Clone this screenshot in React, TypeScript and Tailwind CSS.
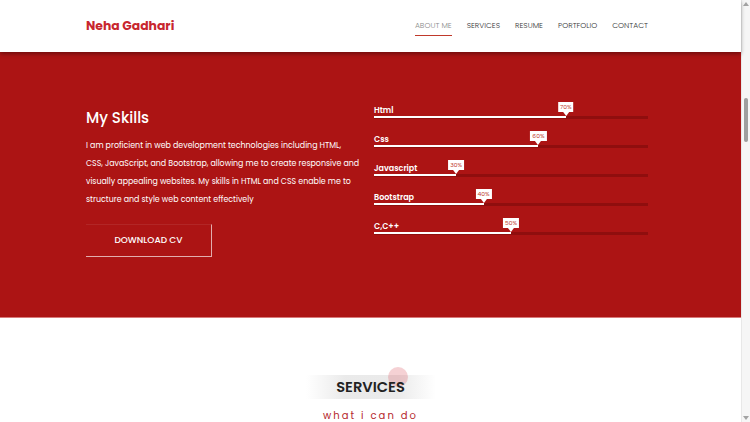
const skills = [
  { name: 'Html', pct: 70 },
  { name: 'Css', pct: 60 },
  { name: 'Javascript', pct: 30 },
  { name: 'Bootstrap', pct: 40 },
  { name: 'C,C++', pct: 50 },
];

const links = ['ABOUT ME', 'SERVICES', 'RESUME', 'PORTFOLIO', 'CONTACT'];

const font = { fontFamily: 'Poppins, Inter, "Noto Sans", sans-serif' };

function SkillBar({ name, pct }: { name: string; pct: number }) {
  return (
    <div className="relative h-[29px] pt-[6px]">
      <div className="h-[10px] text-[8px] leading-[10px] font-semibold text-white">{name}</div>
      <div className="relative h-[3px] bg-[#8f0e0e]">
        <div className="h-[2px] bg-white" style={{ width: `${pct}%` }} />
        {/* tooltip */}
        <div
          className="absolute bottom-[3px] flex flex-col items-center -translate-x-1/2"
          style={{ left: `${pct}%` }}
        >
          <div className="bg-white px-[2px] h-[10px] text-[6px] leading-[10px] text-[#c0392b]">{pct}%</div>
          <div className="w-0 h-0 border-l-[3px] border-r-[3px] border-t-[4px] border-l-transparent border-r-transparent border-t-white" />
        </div>
      </div>
    </div>
  );
}

export default function App() {
  return (
    <div className="flex h-[422px] w-[750px] overflow-hidden bg-white" style={font}>
      <div className="flex-1 flex flex-col">
        {/* Header */}
        <header className="relative z-10 h-[52px] shrink-0 bg-white shadow-[0_2px_4px_rgba(0,0,0,0.35)]">
          <div className="ml-[86px] w-[562px] h-full flex items-center justify-between">
            <div className="text-[12.4px] font-bold text-[#c8262e]">Neha Gadhari</div>
            <nav className="flex gap-[15px] text-[7.6px] font-light">
              {links.map((l, i) => (
                <a
                  key={l}
                  className={
                    i === 0
                      ? 'pt-[4px] pb-[3px] text-[#8a8a8a] border-b border-[#c0392b]'
                      : 'pt-[4px] pb-[3px] text-[#333333] border-b border-transparent'
                  }
                >
                  {l}
                </a>
              ))}
            </nav>
          </div>
        </header>

        {/* Skills */}
        <section className="h-[266px] shrink-0 bg-[#ac1414] border-b border-[#d87a7a]">
          <div className="ml-[86px] w-[562px] pt-[48px] flex gap-[14px]">
            <div className="w-[274px]">
              <h2 className="mt-[6px] text-[15px] leading-[24px] font-medium text-white">My Skills</h2>
              <p className="mt-[7px] text-[7.9px] leading-[18px] text-white whitespace-nowrap">
                I am proficient in web development technologies including HTML,
                <br />
                CSS, JavaScript, and Bootstrap, allowing me to create responsive and
                <br />
                visually appealing websites. My skills in HTML and CSS enable me to
                <br />
                structure and style web content effectively
              </p>
              <button className="mt-[15px] w-[126px] h-[33px] text-[9px] font-medium text-white border-solid border-t border-r border-b border-l-0 border-t-[rgba(255,255,255,0.08)] border-r-[rgba(255,255,255,0.65)] border-b-[rgba(255,255,255,0.65)]">
                DOWNLOAD CV
              </button>
            </div>
            <div className="w-[274px]">
              {skills.map((s) => (
                <SkillBar key={s.name} name={s.name} pct={s.pct} />
              ))}
            </div>
          </div>
        </section>

        {/* Services */}
        <section className="flex flex-col items-center pt-[57px] bg-white">
          <div className="relative flex items-center justify-center w-[130px] h-[24px] bg-[linear-gradient(90deg,rgba(232,232,232,0),rgba(232,232,232,0.9)_30%,rgba(232,232,232,0.9)_70%,rgba(232,232,232,0))]">
            <div className="absolute left-[82px] -top-[8px] w-[20px] h-[20px] rounded-full bg-[rgba(220,90,100,0.28)]" />
            <h2 className="relative text-[14.7px] font-semibold text-[#222]">SERVICES</h2>
          </div>
          <div className="mt-[9px] text-[10px] tracking-[2.1px] text-[#b5262b]">what i can do</div>
        </section>
      </div>

      {/* Scrollbar */}
      <div className="relative w-[9px] h-full bg-[#f6f6f6] border-l border-[#e8e8e8] flex flex-col items-center">
        <div className="mt-[2px] w-0 h-0 border-l-[3px] border-r-[3px] border-b-[4px] border-l-transparent border-r-transparent border-b-[#a3a3a3]" />
        <div className="mt-[92px] w-[4px] h-[44px] rounded-full bg-[#9e9e9e]" />
        <div className="mt-auto mb-[2px] w-0 h-0 border-l-[3px] border-r-[3px] border-t-[4px] border-l-transparent border-r-transparent border-t-[#a3a3a3]" />
      </div>
    </div>
  );
}
